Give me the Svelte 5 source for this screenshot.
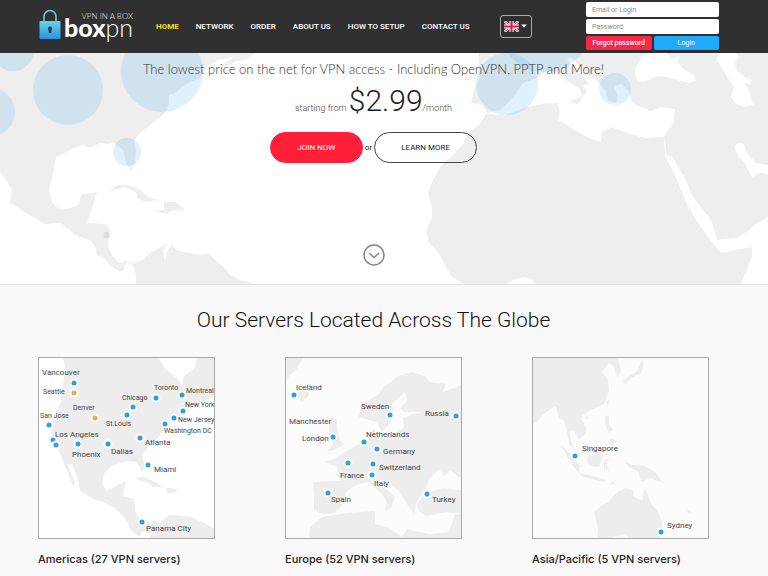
<script>
	let email = '';
	let password = '';

	const nav = ['Home', 'Network', 'Order', 'About us', 'How to setup', 'Contact us'];

	const bubbles = [
		{ x: 13, y: 50, r: 21 },
		{ x: -9, y: 112, r: 24 },
		{ x: 68, y: 90, r: 35 },
		{ x: 162, y: 71, r: 41 },
		{ x: 127, y: 152, r: 14 },
		{ x: 107, y: 235, r: 3.5 },
		{ x: 507, y: 84, r: 31 },
		{ x: 545, y: 26, r: 46 },
		{ x: 615, y: 89, r: 16 }
	];

	const regions = [
		{
			name: 'Americas',
			servers: 27,
			sea: '#ffffff',
			land: [
				'M24 0L27 12L24 24L22 44L14 60L12 74L16 86L22 98L30 118L34 128L36 124L29 108L33 106L38 118L41 132L52 140L66 145L76 150L86 160L92 172L100 179L104 173L112 176L112 182H177V172L165 165L150 158L130 157L120 165L117 163L105 164L97 156L95 141L84 138L87 123L75 129L68 133L63 126L65 116L72 108L88 103L98 104L103 114L106 110L103 96L118 81L125 73L138 59L158 46L177 38V0H158L155 10L145 18L143 28L138 20L125 10L120 0Z',
				'M96 121L104 118L116 124L124 129L114 129L108 124Z',
				'M127 130L138 131L137 134L128 135Z'
			],
			pins: [
				{ x: 35, y: 25 },
				{ x: 35, y: 35, busy: true },
				{ x: 56, y: 60, busy: true },
				{ x: 10, y: 67 },
				{ x: 14, y: 82 },
				{ x: 17, y: 87 },
				{ x: 39, y: 86 },
				{ x: 69, y: 86 },
				{ x: 94, y: 49 },
				{ x: 88, y: 57 },
				{ x: 117, y: 40 },
				{ x: 143, y: 37 },
				{ x: 144, y: 53 },
				{ x: 135, y: 60 },
				{ x: 126, y: 66 },
				{ x: 101, y: 80 },
				{ x: 109, y: 107 },
				{ x: 103, y: 164 }
			],
			labels: [
				{ text: 'Vancouver', x: 3, y: 17 },
				{ text: 'Seattle', x: 4, y: 36, small: true },
				{ text: 'Denver', x: 34, y: 52, small: true },
				{ text: 'San Jose', x: 1, y: 60, small: true },
				{ text: 'Los Angeles', x: 16, y: 79 },
				{ text: 'Phoenix', x: 33, y: 99 },
				{ text: 'Dallas', x: 72, y: 96 },
				{ text: 'St.Louis', x: 67, y: 68, small: true },
				{ text: 'Chicago', x: 83, y: 42, small: true },
				{ text: 'Toronto', x: 115, y: 32, small: true },
				{ text: 'Montreal', x: 147, y: 35, small: true },
				{ text: 'New York', x: 146, y: 49, small: true },
				{ text: 'New Jersey', x: 139, y: 64, small: true },
				{ text: 'Washington DC', x: 125, y: 75, small: true },
				{ text: 'Atlanta', x: 106, y: 87 },
				{ text: 'Miami', x: 115, y: 114 },
				{ text: 'Panama City', x: 107, y: 173 }
			]
		},
		{
			name: 'Europe',
			servers: 52,
			sea: '#fcfcfc',
			land: [
				'M0 0H17L10 12L3 18L0 24Z',
				'M8 34L16 33L23 34L23 38L16 43L9 40Z',
				'M73 59L76 46L93 36L98 28L106 23L112 18L126 14L139 18L144 24L160 26L157 34L168 30L177 26V119L173 119L164 112L158 118L153 111L146 118L143 121L139 133L131 143L128 156L121 146L113 133L99 122L93 123L100 131L109 139L105 150L99 153L101 144L96 136L83 124L73 126L66 129L59 136L56 148L48 155L38 156L28 153V136L27 124L54 123L51 109L39 104L49 101L59 94L73 86L82 82L84 74L89 71L89 79L106 78L118 69L117 60L126 56L136 54L118 54L114 50L121 43L119 34L106 46L108 58L103 66L96 74L90 64L83 62Z',
				'M131 147L140 134L158 130L177 133V156L160 154L140 158L133 153Z',
				'M23 182L24 169L36 159L60 155L89 153L89 166L104 170L116 179L121 171L143 176L163 174L169 156H177V182Z',
				'M44 59L51 62L51 70L54 82L58 87L48 92L41 93L47 86L44 79L43 69Z',
				'M30 80L37 77L38 85L31 89Z'
			],
			pins: [
				{ x: 8, y: 37 },
				{ x: 104, y: 57 },
				{ x: 170, y: 58 },
				{ x: 47, y: 79 },
				{ x: 78, y: 84 },
				{ x: 91, y: 91 },
				{ x: 62, y: 105 },
				{ x: 87, y: 106 },
				{ x: 86, y: 117 },
				{ x: 42, y: 135 },
				{ x: 141, y: 136 }
			],
			labels: [
				{ text: 'Iceland', x: 10, y: 32 },
				{ text: 'Sweden', x: 75, y: 51 },
				{ text: 'Russia', x: 139, y: 58 },
				{ text: 'Manchester', x: 3, y: 66 },
				{ text: 'London', x: 16, y: 83 },
				{ text: 'Netherlands', x: 80, y: 79 },
				{ text: 'Germany', x: 97, y: 96 },
				{ text: 'Switzerland', x: 93, y: 112 },
				{ text: 'France', x: 54, y: 120 },
				{ text: 'Italy', x: 88, y: 128 },
				{ text: 'Spain', x: 45, y: 144 },
				{ text: 'Turkey', x: 146, y: 144 }
			]
		},
		{
			name: 'Asia/Pacific',
			servers: 5,
			sea: '#fcfcfc',
			land: [
				'M0 0H77L74 8L69 14L75 22L76 33L71 46L56 53L50 57L48 61L53 69V76L46 81L41 73L37 74L38 84L42 92L36 86L34 72L31 63L26 60L23 48L13 54L3 64L0 67Z',
				'M76 0H85L88 14L84 19L80 8L73 3Z',
				'M109 2L111 8L108 15L98 20L92 27L90 22L104 13Z',
				'M52 59L56 58L55 62Z',
				'M73 43L76 42L74 50Z',
				'M72 58L76 58L76 66L80 72L76 75L72 66Z',
				'M77 81L83 82L81 88L77 86Z',
				'M53 99L60 97L67 92L70 98L66 109L56 108Z',
				'M28 88L36 94L47 108L46 115L39 107Z',
				'M46 115L60 118L73 122L71 124L50 119Z',
				'M71 102L78 100L73 104L76 113L72 110L71 114Z',
				'M92 104L100 107L112 108L122 114L130 125L118 120L108 124L106 114L96 109Z',
				'M76 126L83 122L79 127Z',
				'M61 154L68 148L76 144L80 138L86 133L93 130L101 133L100 138L109 143L112 129L118 146L124 152L129 163V173L126 182H98L92 176L80 179L77 182H64L65 171Z',
				'M152 150L158 155L156 155Z'
			],
			pins: [
				{ x: 42, y: 98 },
				{ x: 128, y: 174 }
			],
			labels: [
				{ text: 'Singapore', x: 49, y: 93 },
				{ text: 'Sydney', x: 134, y: 170 }
			]
		}
	];
</script>

<header>
	<a class="logo" href="#top" aria-label="boxpn, VPN in a box">
		<svg class="lock" viewBox="0 0 22 31" aria-hidden="true">
			<defs>
				<linearGradient id="lock-fill" x1="0" y1="0" x2="0" y2="1">
					<stop offset="0" stop-color="#6fd0ea" />
					<stop offset="1" stop-color="#2a93dd" />
				</linearGradient>
			</defs>
			<path d="M5 13V7.500a6 6 0 0 1 12 0V13" fill="none" stroke="#6ccbe0" stroke-width="1.600" />
			<rect x="0.500" y="12" width="21" height="18" rx="1" fill="url(#lock-fill)" />
			<path d="M11 17.500a2 2 0 0 1 1.300 3.500v3h-2.600v-3A2 2 0 0 1 11 17.500Z" fill="#173a52" />
		</svg>
		<span class="brand">
			<small>VPN IN A BOX</small>
			<span class="word"><b>box</b>pn</span>
		</span>
	</a>

	<nav>
		{#each nav as item, i}
			<a href="#{item}" class:active={i === 0}>{item}</a>
		{/each}
	</nav>

	<button class="lang" type="button" aria-label="Language: English">
		<svg class="flag" viewBox="0 0 15 11" aria-hidden="true">
			<rect width="15" height="11" fill="#28337f" />
			<path d="M0 0L15 11M15 0L0 11" stroke="#fff" stroke-width="2.400" />
			<path d="M0 0L15 11M15 0L0 11" stroke="#d8203c" stroke-width="0.800" />
			<path d="M7.500 0V11M0 5.500H15" stroke="#fff" stroke-width="4" />
			<path d="M7.500 0V11M0 5.500H15" stroke="#d8203c" stroke-width="2.200" />
		</svg>
		<svg class="caret" viewBox="0 0 6 4" aria-hidden="true"><path d="M0 0.500H6L3 3.500Z" fill="#fff" /></svg>
	</button>

	<form on:submit|preventDefault>
		<input type="text" placeholder="Email or Login" aria-label="Email or Login" bind:value={email} />
		<input type="password" placeholder="Password" aria-label="Password" bind:value={password} />
		<div class="actions">
			<button class="forgot" type="button">Forgot password</button>
			<button class="login" type="submit">Login</button>
		</div>
	</form>
</header>

<section class="hero" id="top">
	<svg class="world" viewBox="0 53 768 231" preserveAspectRatio="xMidYMid slice" aria-hidden="true">
		<g fill="#eeeeee">
			<!-- Americas -->
			<path d="M0 50H262L252 55L246 60L236 61L228 66L222 65L234 57L218 60L206 68L200 78L190 82L181 88L175 93L169 95L169 104L165 113L150 125L140 133L134 140L136 152L135 165L131 170L126 163L123 150L118 146L113 142L108 144L100 143L90 148L82 145L70 150L56 158L54 165L53 175L49 188L51 200L56 207L62 210L71 208L79 204L81 195L97 192L93 205L87 223L105 224L110 229L108 240L108 247L112 255L119 263L127 261L133 263L143 260L150 253L158 249L167 243L163 251L165 261L167 252L172 245L175 249L183 252L190 253L199 255L208 253L217 262L225 268L230 275L240 280L255 284H136V275L133 266L128 262L124 266L124 270L120 272L110 265L104 258L97 255L96 248L90 240L75 235L70 230L60 223L45 224L28 214L10 203L12 190L5 178L0 172Z" />
			<path d="M110 191L117 185L128 185L140 189L148 197L158 200L146 202L138 199L136 192L124 187Z" />
			<path d="M164 202L176 202L184 209V210L170 211L167 214L154 211L164 210Z" />
			<!-- Europe with the near east -->
			<path d="M479 50H768V217L757 223L745 233L737 238L725 239L717 240L712 223L709 217L699 205L691 193L686 180L678 167L672 156H667L664 137L674 122L675 109L662 107L651 111L641 107L632 103L629 92L622 84L614 86L618 96L616 103L608 100L606 91L596 80L583 70L571 57L567 59L572 67L586 79L589 84L583 85L587 92L582 97L578 104L569 102L576 99L582 96L580 89L570 83L560 75L548 70L537 78L523 83L518 90L508 103L500 110L487 113L483 105L471 103L475 88L479 78Z" />
			<!-- Africa -->
			<path d="M486 114L505 115L524 108L541 104L557 103L560 112L558 120L571 128L587 137L601 142L602 132L612 127L627 133L644 138L664 137L665 156L674 173L686 202L696 220L712 242L721 253L736 250L752 247V257L741 284H534L532 279L524 277L513 280L507 284H464L452 277L446 267L439 253L429 243L426 230L432 218V207L428 193L434 178L440 167L451 157L464 143L467 133L480 124Z" />
		</g>
		<g fill="#ffffff">
			<path d="M635 74L636 67L641 58L648 52H666L672 60L680 55L677 62L684 69L694 75L696 81L688 83L677 80L663 76L655 77L644 82L637 80Z" />
			<path d="M716 58L724 50L735 52L739 57L734 63L738 72L745 77L751 79L751 84L744 83L749 90L753 105L745 107L736 104L731 97L734 87L727 77L721 67Z" />
			<path d="M734 147L738 143L744 144L747 153L756 163L768 165V174L760 173L752 177L747 168L746 165L738 156Z" />
		</g>
		<g fill="#37abf5" fill-opacity="0.16">
			{#each bubbles as b}
				<circle cx={b.x} cy={b.y} r={b.r} />
			{/each}
		</g>
	</svg>

	<div class="pitch">
		<p class="tagline">The lowest price on the net for VPN access - Including OpenVPN, PPTP and More!</p>
		<p class="price">starting from <strong>$2.99</strong>/month</p>
		<div class="cta">
			<a class="join" href="#order">JOIN NOW</a>
			<span>or</span>
			<a class="learn" href="#servers">LEARN MORE</a>
		</div>
		<a class="down" href="#servers" aria-label="Scroll down">
			<svg viewBox="0 0 22 22" fill="none" stroke="#84888f" stroke-width="1.500">
				<circle cx="11" cy="11" r="10" />
				<path d="M6 9L11 13.500L16 9" />
			</svg>
		</a>
	</div>
</section>

<section class="servers" id="servers">
	<h2>Our Servers Located Across The Globe</h2>
	<div class="regions">
		{#each regions as region}
			<article>
				<svg class="map" viewBox="0 0 175 180" role="img" aria-label="{region.name} map">
					<rect width="177" height="182" fill={region.sea} />
					{#each region.land as d}
						<path {d} fill="#ededed" />
					{/each}
					{#each region.pins as pin}
						<circle cx={pin.x} cy={pin.y} r="4.500" fill="#fff" fill-opacity="0.8" />
						<circle cx={pin.x} cy={pin.y} r="2.500" fill={pin.busy ? '#f0a848' : '#2f9fe0'} />
					{/each}
					{#each region.labels as label}
						<text x={label.x} y={label.y} class:small={label.small}>{label.text}</text>
					{/each}
				</svg>
				<h3>{region.name} ({region.servers} VPN servers)</h3>
			</article>
		{/each}
	</div>
</section>

<style>
	:global(body) {
		background: #f9f9f9;
		font-family: Roboto, 'Open Sans', sans-serif;
		color: #222;
	}

	a {
		color: inherit;
		text-decoration: none;
	}

	button,
	input {
		font-family: inherit;
		box-sizing: border-box;
	}

	header {
		display: flex;
		align-items: center;
		background: #303030;
		color: #fff;
		padding: 2px 49px 3px 39px;
	}

	.logo {
		display: flex;
		align-items: center;
		gap: 3px;
		width: 95px;
		margin-right: 22px;
	}

	.lock {
		width: 22px;
		height: 31px;
		margin-bottom: 3px;
	}

	.brand {
		display: flex;
		flex-direction: column;
		align-items: flex-end;
		padding-bottom: 6px;
		font-family: Lato, sans-serif;
	}

	.brand small {
		font-size: 8px;
		line-height: 8px;
		font-weight: 300;
		color: #e5e5e5;
	}

	.word {
		font-size: 25px;
		line-height: 14px;
		font-weight: 300;
	}

	.word b {
		font-weight: 900;
	}

	nav {
		display: flex;
		gap: 17px;
		font-size: 8px;
		font-weight: 500;
		text-transform: uppercase;
		white-space: nowrap;
	}

	nav .active {
		color: #ffdf1b;
		font-weight: 700;
	}

	.lang {
		display: flex;
		align-items: center;
		justify-content: center;
		gap: 2px;
		width: 32px;
		height: 23px;
		margin-left: 30px;
		padding: 0;
		background: none;
		border: 1px solid #aaa;
		border-radius: 3px;
	}

	.flag {
		width: 15px;
		height: 11px;
	}

	.caret {
		width: 6px;
		height: 4px;
	}

	form {
		display: flex;
		flex-direction: column;
		gap: 2px;
		width: 133px;
		margin-left: auto;
	}

	input {
		width: 100%;
		height: 15px;
		padding: 0 6px;
		border: 0;
		border-radius: 2px;
		background: #fff;
		font-size: 7px;
	}

	input::placeholder {
		color: #8b8b8b;
	}

	.actions {
		display: flex;
		gap: 2px;
	}

	.actions button {
		flex: 1;
		height: 14px;
		padding: 0;
		border: 0;
		border-radius: 2px;
		color: #fff;
		font-size: 7px;
		font-weight: 500;
		white-space: nowrap;
	}

	.actions .login {
		background: #1fabfc;
		font-weight: 400;
	}

	.forgot {
		background: #fb2748;
	}

	.hero {
		position: relative;
		overflow: hidden;
		background: #fff;
		border-bottom: 1px solid #e6e6e6;
	}

	.world {
		position: absolute;
		inset: 0;
		width: 100%;
		height: 100%;
	}

	.pitch {
		position: relative;
		display: flex;
		flex-direction: column;
		align-items: center;
		padding: 6px 59px 18px 38px;
	}

	.tagline {
		margin: 0;
		font-family: Lato, sans-serif;
		font-size: 13px;
		line-height: 20px;
		font-weight: 300;
		color: #333;
	}

	.price {
		margin: 4px 0 0;
		font-size: 9px;
		line-height: 36px;
		font-weight: 300;
		color: #444;
	}

	.price strong {
		font-size: 30px;
		font-weight: 300;
		color: #222;
	}

	.cta {
		display: flex;
		align-items: center;
		gap: 2px;
		margin-top: 6px;
		font-size: 8px;
	}

	.cta a {
		box-sizing: border-box;
		border-radius: 16px;
		line-height: 29px;
		text-align: center;
	}

	.join {
		width: 93px;
		border: 1px solid #ff1f38;
		background: #ff1f38;
		color: #fff;
	}

	.learn {
		width: 103px;
		border: 1px solid #444;
	}

	.down {
		margin-top: 81px;
	}

	.down svg {
		display: block;
		width: 22px;
		height: 22px;
	}

	.servers {
		padding: 20px 59px 10px 38px;
	}

	h2 {
		margin: 0;
		font-size: 21px;
		line-height: 30px;
		font-weight: 300;
		text-align: center;
		color: #111;
	}

	.regions {
		display: grid;
		grid-template-columns: repeat(3, 1fr);
		gap: 70px;
		margin-top: 22px;
	}

	.map {
		display: block;
		box-sizing: border-box;
		width: 100%;
		border: 1px solid #aaa;
	}

	.map text {
		font-size: 8px;
		fill: #444;
	}

	.map .small {
		font-size: 7px;
	}

	h3 {
		margin: 12px 0 0;
		font-family: Inter, sans-serif;
		font-size: 11px;
		line-height: 16px;
		font-weight: 500;
		white-space: nowrap;
	}
</style>
